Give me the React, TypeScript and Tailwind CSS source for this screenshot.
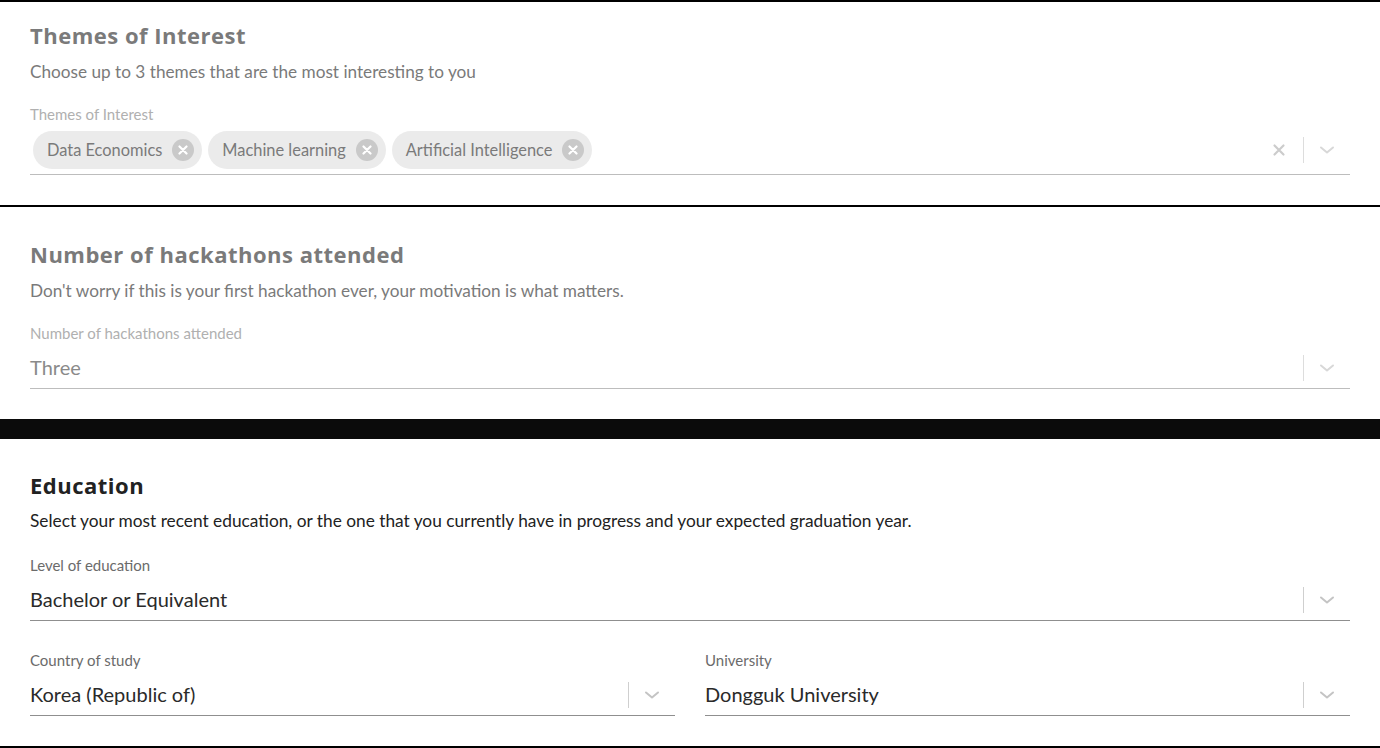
import React from 'react';

const lato = { fontFamily: 'Lato, "Open Sans", sans-serif' };
const head = { fontFamily: '"Open Sans", Inter, sans-serif' };

const Chevron = ({ color }: { color: string }) => (
  <svg width="16" height="10" viewBox="0 0 16 10" fill="none" stroke={color} strokeWidth="2" strokeLinecap="round" strokeLinejoin="round">
    <path d="M2 2.5l6 5 6-5" />
  </svg>
);

const ClearX = () => (
  <svg width="14" height="14" viewBox="0 0 14 14" fill="none" stroke="#cccccc" strokeWidth="2.2" strokeLinecap="round">
    <path d="M2.5 2.5l9 9M11.5 2.5l-9 9" />
  </svg>
);

const Chip = ({ label }: { label: string }) => (
  <div className="flex items-center h-[38px] rounded-full bg-[#ebebeb] pl-[14px] pr-[8px] gap-[10px]">
    <span className="text-[16.4px] text-[#7a7a7a]">{label}</span>
    <span className="w-[22px] h-[22px] rounded-full bg-[#c9c9c9] flex items-center justify-center">
      <svg width="10" height="10" viewBox="0 0 10 10" stroke="#ffffff" strokeWidth="2.2" strokeLinecap="round">
        <path d="M1.5 1.5l7 7M8.5 1.5l-7 7" />
      </svg>
    </span>
  </div>
);

const Indicators = ({ clear, sep, chev }: { clear?: boolean; sep: string; chev: string }) => (
  <div className="flex items-center shrink-0">
    {clear && (
      <div className="w-[24px] mr-[12px] flex justify-center">
        <ClearX />
      </div>
    )}
    <span className={`w-px h-[26px] ${sep}`} />
    <div className="w-[46px] flex justify-center">
      <Chevron color={chev} />
    </div>
  </div>
);

const SelectField = ({
  label,
  value,
  active,
}: {
  label: string;
  value: string;
  active?: boolean;
}) => (
  <div className="flex-1">
    <div className={`text-[15px] leading-[20px] ${active ? 'text-[#6b6b6b]' : 'text-[#b0b0b0]'}`}>{label}</div>
    <div
      className={`mt-[5px] flex items-center h-[40px] box-content border-b ${active ? 'border-[#8f8f8f]' : 'border-[#bdbdbd]'}`}
    >
      <span className={`flex-1 text-[20px] leading-[24px] pb-[3px] ${active ? 'text-[#2a2a2a]' : 'text-[#8a8a8a]'}`}>{value}</span>
      <Indicators sep={active ? 'bg-[#cfcfcf]' : 'bg-[#dddddd]'} chev={active ? '#c4c4c4' : '#d8d8d8'} />
    </div>
  </div>
);

export default function App() {
  return (
    <div className="w-[1380px] h-[748px] overflow-hidden bg-white" style={lato}>
      <section className="border-t-2 border-b-2 border-black px-[30px] pt-[19px] pb-[30px]">
        <h2 className="text-[22px] leading-[28px] font-bold tracking-[0.5px] text-[#7a7a7a]" style={head}>
          Themes of Interest
        </h2>
        <p className="mt-[11px] text-[17.2px] leading-[24px] text-[#7a7a7a]">
          Choose up to 3 themes that are the most interesting to you
        </p>
        <div className="mt-[20px] text-[15px] leading-[20px] text-[#b0b0b0]">Themes of Interest</div>
        <div className="mt-[7px] flex items-center border-b border-[#bdbdbd] pb-[5px]">
          <div className="flex-1 flex items-center gap-[6px] pl-[3px]">
            <Chip label="Data Economics" />
            <Chip label="Machine learning" />
            <Chip label="Artificial Intelligence" />
          </div>
          <Indicators clear sep="bg-[#dddddd]" chev="#d8d8d8" />
        </div>
      </section>

      <section className="px-[30px] pt-[33px] pb-[30px]">
        <h2 className="text-[22px] leading-[28px] font-bold tracking-[0.5px] text-[#7a7a7a]" style={head}>
          Number of hackathons attended
        </h2>
        <p className="mt-[11px] text-[17.2px] leading-[24px] text-[#7a7a7a]">
          Don't worry if this is your first hackathon ever, your motivation is what matters.
        </p>
        <div className="mt-[20px]">
          <SelectField label="Number of hackathons attended" value="Three" />
        </div>
      </section>

      <div className="h-[20px] bg-[#0b0b0b]" />

      <section className="border-b-2 border-black px-[30px] pt-[32px] pb-[30px]">
        <h2 className="text-[22px] leading-[28px] font-bold tracking-[0.5px] text-[#222222]" style={head}>
          Education
        </h2>
        <p className="mt-[10px] text-[17.3px] leading-[24px] text-[#222222]">
          Select your most recent education, or the one that you currently have in progress and your expected graduation year.
        </p>
        <div className="mt-[22px]">
          <SelectField label="Level of education" value="Bachelor or Equivalent" active />
        </div>
        <div className="mt-[29px] flex gap-[30px]">
          <SelectField label="Country of study" value="Korea (Republic of)" active />
          <SelectField label="University" value="Dongguk University" active />
        </div>
      </section>
    </div>
  );
}
